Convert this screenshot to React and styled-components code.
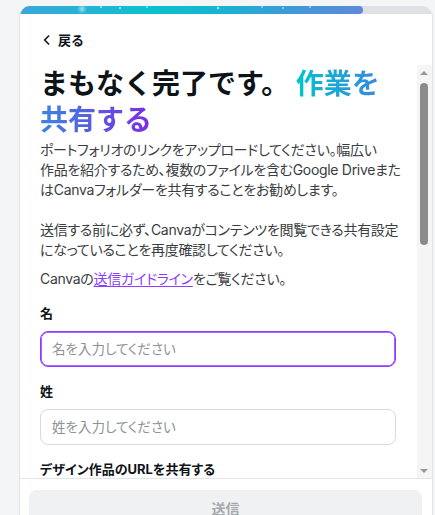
import React from 'react';
import styled, { createGlobalStyle } from 'styled-components';

const GlobalStyle = createGlobalStyle`
  html, body { margin: 0; padding: 0; height: 100%; overflow: hidden; background: #f4f5f7; }
  body { font-family: "Inter", "Noto Sans CJK JP", sans-serif; color: #0e1318; }
  *, *::before, *::after { box-sizing: border-box; }
`;

const Page = styled.div`
  padding: 6px 0 0 19px;
`;

const Card = styled.div`
  width: 414px;
  height: 532px;
  background: #fff;
  border: 1px solid #e1e3e7;
  border-top: none;
  border-bottom: none;
  border-radius: 11px 11px 0 0;
  overflow: hidden;
  display: flex;
  flex-direction: column;
`;

const Progress = styled.div`
  height: 8px;
  flex-shrink: 0;
  background: #dfe1e6;
  display: flex;
`;

const ProgressFill = styled.div`
  height: 100%;
  border-radius: 0 4px 4px 0;
  background:
    radial-gradient(circle at 62px 3px, rgba(255,255,255,0.55) 0, rgba(255,255,255,0) 5px),
    radial-gradient(circle at 81px 1px, rgba(255,255,255,0.9) 0, rgba(255,255,255,0) 1.6px),
    radial-gradient(circle at 100px 2px, rgba(255,255,255,0.9) 0, rgba(255,255,255,0) 1.6px),
    radial-gradient(circle at 127px 1px, rgba(255,255,255,0.8) 0, rgba(255,255,255,0) 1.4px),
    radial-gradient(circle at 198px 2px, rgba(255,255,255,0.9) 0, rgba(255,255,255,0) 1.8px),
    radial-gradient(circle at 242px 1px, rgba(255,255,255,0.8) 0, rgba(255,255,255,0) 1.4px),
    radial-gradient(circle at 263px 2px, rgba(255,255,255,0.8) 0, rgba(255,255,255,0) 1.4px),
    radial-gradient(circle at 290px 1px, rgba(255,255,255,0.8) 0, rgba(255,255,255,0) 1.4px),
    linear-gradient(90deg, #3aa7da 0%, #0bc1cd 38%, #17b4d1 58%, #4496d7 82%, #5d8ad9 100%);
`;

const Header = styled.div`
  height: 51px;
  flex-shrink: 0;
  display: flex;
  align-items: center;
  padding-left: 23px;
`;

const BackButton = styled.button`
  display: flex;
  align-items: center;
  gap: 8px;
  padding: 0;
  border: 0;
  background: none;
  cursor: pointer;
  font-family: inherit;
  font-size: 13px;
  font-weight: 600;
  line-height: 20px;
  color: #0e1318;
`;

const Main = styled.div`
  flex: 1;
  min-height: 0;
  display: flex;
`;

const Scroll = styled.div`
  flex: 1;
  min-width: 0;
  overflow-y: auto;
  overflow-x: hidden;
  padding: 1px 21px 24px 20px;
  scrollbar-width: none;
  &::-webkit-scrollbar { display: none; }
`;

const Rail = styled.div`
  width: 15px;
  flex-shrink: 0;
  background: #f5f5f5;
  display: flex;
  flex-direction: column;
`;

const RailButton = styled.div`
  height: 15px;
  flex-shrink: 0;
  display: flex;
  align-items: center;
  justify-content: center;
  padding-right: 1px;
`;

const Track = styled.div`
  flex: 1;
  padding: 3px 4px 3px 3px;
`;

const Thumb = styled.div`
  height: 162px;
  border-radius: 4px;
  background: #8b8b8b;
`;

const Title = styled.h1`
  margin: 0 0 2px;
  font-size: 28px;
  line-height: 36px;
  font-weight: 700;
  color: #0e1318;
`;

const Gradient = styled.span`
  background: linear-gradient(90deg, #00c4cc 0%, #3b86e0 43%, #7d2ae8 100%);
  -webkit-background-clip: text;
  background-clip: text;
  color: transparent;
`;

const Text = styled.p`
  margin: ${p => (p.$spaced ? '9px' : '0')} 0 0;
  font-size: 14px;
  line-height: 20px;
  letter-spacing: -0.3px;
  color: #3a3d42;
  white-space: nowrap;
  font-feature-settings: "palt";
`;

const Link = styled.a`
  color: #8b3dff;
  text-decoration: underline;
  text-underline-offset: 2px;
`;

const Field = styled.div`
  margin-top: 14px;
  display: flex;
  flex-direction: column;
  gap: 8px;
`;

const Label = styled.label`
  font-size: 13px;
  line-height: 20px;
  font-weight: 700;
  color: #0e1318;
  font-feature-settings: "palt";
`;

const Input = styled.input`
  height: 36px;
  width: 100%;
  border: 1px solid ${p => (p.$focused ? '#8b3dff' : '#d8dadf')};
  box-shadow: ${p => (p.$focused ? 'inset 0 0 0 0.8px #8b3dff' : 'none')};
  border-radius: 8px;
  padding: 0 11px;
  font-family: inherit;
  font-size: 13.5px;
  color: #0e1318;
  background: #fff;
  outline: none;
  font-feature-settings: "palt";
  &::placeholder { color: #8e9298; }
`;

const TextArea = styled.textarea`
  height: 110px;
  width: 100%;
  border: 1px solid #d8dadf;
  border-radius: 8px;
  padding: 8px 11px;
  font-family: inherit;
  font-size: 13.5px;
  resize: none;
  outline: none;
  &::placeholder { color: #8e9298; }
`;

const Hint = styled.p`
  margin: 0;
  font-size: 12px;
  line-height: 18px;
  color: #6b6f76;
  font-feature-settings: "palt";
`;

const CheckRow = styled.label`
  margin-top: 16px;
  display: flex;
  gap: 10px;
  align-items: flex-start;
  font-size: 13px;
  line-height: 20px;
  color: #3a3d42;
`;

const Box = styled.span`
  flex-shrink: 0;
  width: 18px;
  height: 18px;
  margin-top: 1px;
  border: 1.5px solid #8e9298;
  border-radius: 4px;
`;

const Footer = styled.div`
  flex-shrink: 0;
  border-top: 1px solid #e4e5e9;
  padding: 11px 10px 12px 9px;
`;

const Submit = styled.button`
  width: 100%;
  height: 36px;
  border: 0;
  border-radius: 8px;
  background: #f0f1f3;
  color: #a5a8ad;
  font-family: inherit;
  font-size: 14px;
  font-weight: 600;
`;

const Chevron = () => (
  <svg width="7" height="10" viewBox="0 0 7 10" aria-hidden="true">
    <path d="M5.6 1 L1.6 5 L5.6 9" fill="none" stroke="#0e1318" strokeWidth="1.6" strokeLinecap="round" strokeLinejoin="round" />
  </svg>
);

const Arrow = ({ down }) => (
  <svg width="8" height="4" viewBox="0 0 8 4" aria-hidden="true">
    <polygon points={down ? '0,0 8,0 4,4' : '0,4 8,4 4,0'} fill="#9a9a9a" />
  </svg>
);

const progress = 83.3;

export default function App() {
  return (
    <>
      <GlobalStyle />
      <Page>
        <Card>
          <Progress>
            <ProgressFill style={{ width: `${progress}%` }} />
          </Progress>
          <Header>
            <BackButton>
              <Chevron />
              戻る
            </BackButton>
          </Header>
          <Main>
            <Scroll>
              <Title>
                まもなく完了です。 <Gradient>作業を共有する</Gradient>
              </Title>
              <Text>
                ポートフォリオのリンクをアップロードしてください。幅広い<br />
                作品を紹介するため、複数のファイルを含むGoogle Driveまた<br />
                はCanvaフォルダーを共有することをお勧めします。<br />
                <br />
                送信する前に必ず、Canvaがコンテンツを閲覧できる共有設定<br />
                になっていることを再度確認してください。
              </Text>
              <Text $spaced>
                Canvaの<Link href="#">送信ガイドライン</Link>をご覧ください。
              </Text>
              <Field>
                <Label>名</Label>
                <Input $focused placeholder="名を入力してください" />
              </Field>
              <Field>
                <Label>姓</Label>
                <Input placeholder="姓を入力してください" />
              </Field>
              <Field>
                <Label>デザイン作品のURLを共有する</Label>
                <Input placeholder="https://" />
                <Hint>Google Drive、Canvaフォルダー、またはポートフォリオのリンク</Hint>
              </Field>
              <Field>
                <Label>LinkedInのURL（任意）</Label>
                <Input placeholder="https://www.linkedin.com/in/" />
              </Field>
              <Field>
                <Label>自己紹介</Label>
                <TextArea placeholder="あなたについて教えてください" />
              </Field>
              <Field>
                <Label>居住国</Label>
                <Input placeholder="国を選択してください" />
              </Field>
              <CheckRow>
                <Box />
                送信することで、Canvaのプライバシーポリシーに同意したものとみなされます。
              </CheckRow>
            </Scroll>
            <Rail aria-hidden="true">
              <RailButton><Arrow /></RailButton>
              <Track><Thumb /></Track>
              <RailButton><Arrow down /></RailButton>
            </Rail>
          </Main>
          <Footer>
            <Submit disabled>送信</Submit>
          </Footer>
        </Card>
      </Page>
    </>
  );
}
